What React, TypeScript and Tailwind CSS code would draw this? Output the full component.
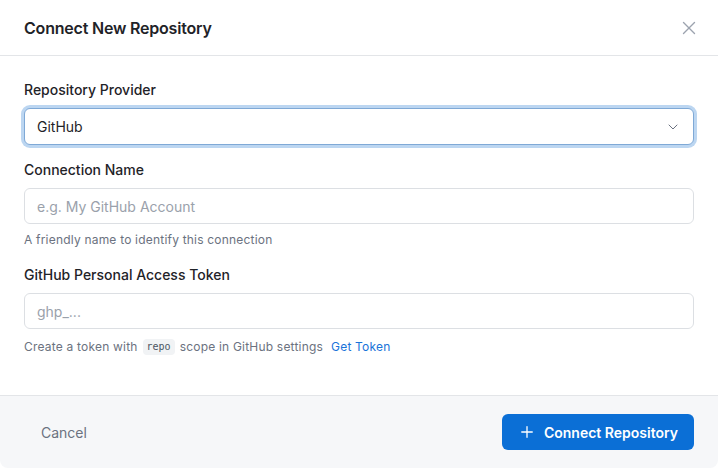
import { ChevronDown, Plus, X } from "lucide-react";

export default function App() {
  return (
    <div className="w-[718px] h-[468px] bg-white" style={{ fontFamily: "Inter, 'Noto Sans', sans-serif" }}>
      <div className="h-full flex flex-col rounded-lg overflow-hidden bg-white">
        {/* header */}
        <div className="h-[56px] flex items-center justify-between px-6 border-b border-[#e3e5e8]">
          <h2 className="text-[16px] font-semibold text-[#1f2328] tracking-[-0.2px]">Connect New Repository</h2>
          <X className="w-[22px] h-[22px] text-[#9ca3af] -mr-[6px]" strokeWidth={1.5} />
        </div>

        {/* body */}
        <div className="flex-1 px-6 pt-[24px]">
          <label className="block text-[14px] font-medium text-[#1f2328] mb-[8px] leading-[20px]">Repository Provider</label>
          <div className="h-[37px] flex items-center justify-between px-3 rounded-md border border-[#7fa9d6] ring-[3px] ring-[#bcd6f1] bg-white">
            <span className="text-[14px] text-[#1f2328]">GitHub</span>
            <ChevronDown className="w-[16px] h-[16px] text-[#6b7280]" strokeWidth={1.5} />
          </div>

          <label className="block text-[14px] font-medium text-[#1f2328] mt-[15px] mb-[8px] leading-[20px]">Connection Name</label>
          <div className="h-[36px] flex items-center px-3 rounded-md border border-[#dcdfe3] bg-white">
            <span className="text-[14px] text-[#9aa1ab]">e.g. My GitHub Account</span>
          </div>
          <p className="mt-[8px] text-[12px] text-[#6b7280] leading-[16px] tracking-[0.2px]">A friendly name to identify this connection</p>

          <label className="block text-[14px] font-medium text-[#1f2328] mt-[17px] mb-[8px] leading-[20px]">GitHub Personal Access Token</label>
          <div className="h-[36px] flex items-center px-3 rounded-md border border-[#dcdfe3] bg-white">
            <span className="text-[14px] text-[#9aa1ab]">ghp_...</span>
          </div>
          <p className="mt-[8px] text-[12px] text-[#6b7280] leading-[20px] tracking-[0.2px] flex items-center">
            Create a token with
            <code className="mx-[5px] px-[4px] rounded bg-[#f1f3f5] text-[10px] text-[#4b5563] leading-[16px] tracking-normal" style={{ fontFamily: "'DejaVu Sans Mono', monospace" }}>repo</code>
            scope in GitHub settings
            <a className="ml-[8px] text-[#1a73d9]">Get Token</a>
          </p>
        </div>

        {/* footer */}
        <div className="h-[73px] flex items-center justify-between px-6 border-t border-[#e3e5e8] bg-[#f6f7f9]">
          <button className="px-[17px] h-[36px] text-[14px] text-[#6b7280]">Cancel</button>
          <button className="h-[36px] px-4 flex items-center gap-2 rounded-md bg-[#0b6fd6] text-white text-[14px] font-semibold">
            <Plus className="w-[18px] h-[18px]" strokeWidth={1.75} />
            Connect Repository
          </button>
        </div>
      </div>
    </div>
  );
}
